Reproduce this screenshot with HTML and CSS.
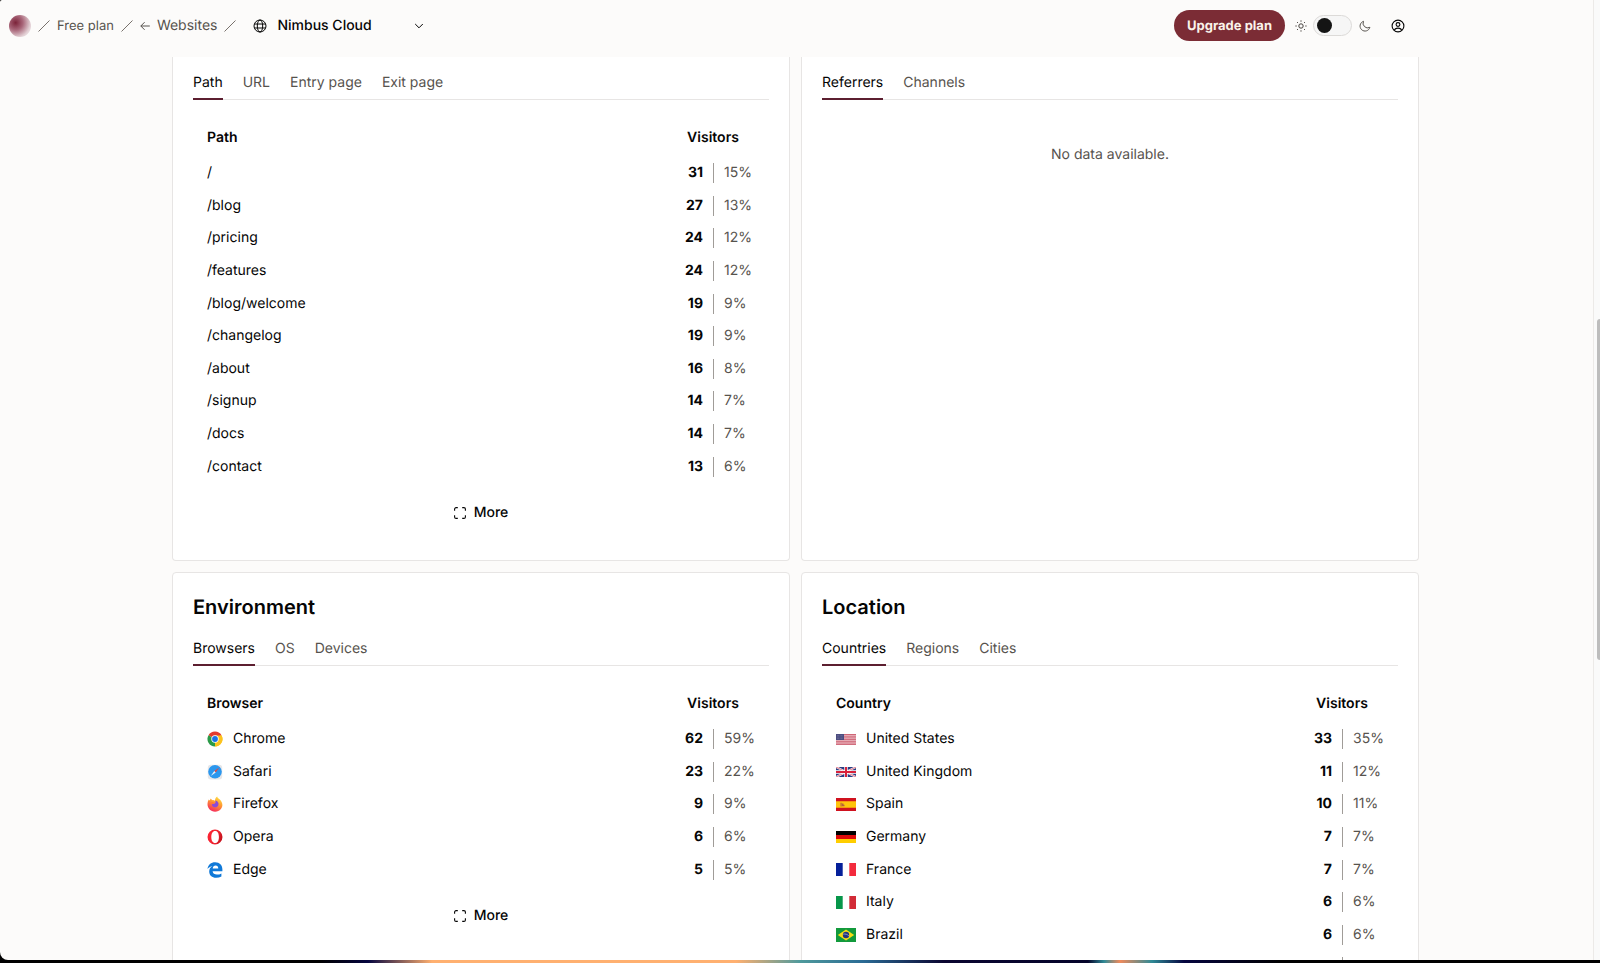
FILE: index.html
```html
<!DOCTYPE html>
<html lang="en">
<head>
    <meta charset="UTF-8">
    <meta name="viewport" content="width=device-width, initial-scale=1.0">
    <title>Nimbus Cloud</title>
    <link rel="stylesheet" href="styles.css">
</head>
<body>
    <!-- shared icons -->
    <svg class="sprite" aria-hidden="true">
        <symbol id="slash" viewBox="0 0 12 12"><path d="M.5 11.500 11.500.5" fill="none" stroke="currentColor"/></symbol>
        <symbol id="maximize" viewBox="0 0 12 12"><path d="M.6 3.800V2.100A1.500 1.500 0 0 1 2.100.6h1.700M8.200.6h1.700a1.500 1.500 0 0 1 1.500 1.500v1.700M11.400 8.200v1.700a1.500 1.500 0 0 1-1.500 1.500H8.200M3.800 11.400H2.100A1.500 1.500 0 0 1 .6 9.900V8.200" fill="none" stroke="currentColor" stroke-width="1.100"/></symbol>
    </svg>

    <div class="window">
        <header class="topbar">
            <nav class="crumbs">
                <a class="logo" href="#" aria-label="Home"></a>
                <svg class="slash"><use href="#slash"/></svg>
                <a class="plan" href="#">Free plan</a>
                <svg class="slash"><use href="#slash"/></svg>
                <a class="back" href="#">
                    <svg width="10" height="10" viewBox="0 0 10 10"><path d="M9.800 5H.8M4.600 1.200.8 5l3.800 3.800" fill="none" stroke="currentColor"/></svg>
                    Websites
                </a>
                <svg class="slash"><use href="#slash"/></svg>
            </nav>
            <div class="site-picker">
                <svg width="14" height="14" viewBox="0 0 14 14" fill="none" stroke="currentColor"><circle cx="7" cy="7" r="6"/><ellipse cx="7" cy="7" rx="2.700" ry="6"/><path d="M1.300 5h11.400M1.300 9h11.400"/></svg>
                <select class="site-select" aria-label="Website">
                    <option>Nimbus Cloud</option>
                </select>
                <svg class="chevron" width="10" height="6" viewBox="0 0 10 6"><path d="M1.200 1 5 4.800 8.800 1" fill="none" stroke="currentColor"/></svg>
            </div>
            <div class="actions">
                <button class="upgrade">Upgrade plan</button>
                <svg class="sun" width="12" height="12" viewBox="0 0 12 12" fill="none" stroke="currentColor"><circle cx="6" cy="6" r="2.200"/><path d="M6 .4v1.300M6 10.300v1.300M.4 6h1.300M10.300 6h1.300M2 2l.9.9M9.100 9.100l.9.9M2 10l.9-.9M9.100 2.900 10 2"/></svg>
                <input class="theme-switch" type="checkbox" role="switch" aria-label="Dark theme">
                <svg class="moon" width="12" height="12" viewBox="0 0 12 12"><path d="M4.500 1.300A5 5 0 1 0 10.900 7.300 4.600 4.600 0 0 1 4.500 1.300z" fill="none" stroke="currentColor"/></svg>
                <button class="account" aria-label="Account">
                    <svg width="14" height="14" viewBox="0 0 14 14" fill="none" stroke="currentColor" stroke-width="1.100"><circle cx="7" cy="7" r="5.900"/><circle cx="7" cy="5.500" r="1.900"/><path d="M3.500 11.200C3.800 9.400 5.200 9.100 7 9.100s3.200.3 3.500 2.100"/></svg>
                </button>
            </div>
        </header>

        <main class="content">
            <div class="cards">
                <section class="card card-scrolled">
                    <div class="tabs">
                        <button class="tab active">Path</button>
                        <button class="tab">URL</button>
                        <button class="tab">Entry page</button>
                        <button class="tab">Exit page</button>
                    </div>
                    <table class="metrics ten-rows">
                        <colgroup><col><col class="col-num"><col class="col-num"></colgroup>
                        <thead><tr><th>Path</th><th class="visitors" colspan="2">Visitors</th></tr></thead>
                        <tbody>
                            <tr><td>/</td><td class="num">31</td><td><span class="pct">15%</span></td></tr>
                            <tr><td>/blog</td><td class="num">27</td><td><span class="pct">13%</span></td></tr>
                            <tr><td>/pricing</td><td class="num">24</td><td><span class="pct">12%</span></td></tr>
                            <tr><td>/features</td><td class="num">24</td><td><span class="pct">12%</span></td></tr>
                            <tr><td>/blog/welcome</td><td class="num">19</td><td><span class="pct">9%</span></td></tr>
                            <tr><td>/changelog</td><td class="num">19</td><td><span class="pct">9%</span></td></tr>
                            <tr><td>/about</td><td class="num">16</td><td><span class="pct">8%</span></td></tr>
                            <tr><td>/signup</td><td class="num">14</td><td><span class="pct">7%</span></td></tr>
                            <tr><td>/docs</td><td class="num">14</td><td><span class="pct">7%</span></td></tr>
                            <tr><td>/contact</td><td class="num">13</td><td><span class="pct">6%</span></td></tr>
                        </tbody>
                    </table>
                    <button class="more"><svg width="12" height="12"><use href="#maximize"/></svg>More</button>
                </section>

                <section class="card card-scrolled">
                    <div class="tabs">
                        <button class="tab active">Referrers</button>
                        <button class="tab">Channels</button>
                    </div>
                    <p class="empty">No data available.</p>
                </section>

                <section class="card">
                    <h2>Environment</h2>
                    <div class="tabs">
                        <button class="tab active">Browsers</button>
                        <button class="tab">OS</button>
                        <button class="tab">Devices</button>
                    </div>
                    <table class="metrics five-rows">
                        <colgroup><col><col class="col-num"><col class="col-num"></colgroup>
                        <thead><tr><th>Browser</th><th class="visitors" colspan="2">Visitors</th></tr></thead>
                        <tbody>
                            <tr>
                                <td><span class="name">
                                    <svg width="16" height="16" viewBox="0 0 16 16"><path d="M8 8 1.500 4.250A7.500 7.500 0 0 1 14.500 4.250z" fill="#e33b2e"/><path d="M8 8l6.500-3.750A7.500 7.500 0 0 1 8 15.500z" fill="#fcc31e"/><path d="M8 8v7.500A7.500 7.500 0 0 1 1.500 4.250z" fill="#2a9a48"/><path d="M8 4.500h6.600a7.500 7.500 0 0 1-6.600 11l3-5.700z" fill="#fcc31e"/><circle cx="8" cy="8" r="3.700" fill="#fff"/><circle cx="8" cy="8" r="2.900" fill="#1a73e8"/></svg>
                                    Chrome
                                </span></td><td class="num">62</td><td><span class="pct">59%</span></td>
                            </tr>
                            <tr>
                                <td><span class="name">
                                    <svg width="16" height="16" viewBox="0 0 16 16"><rect x=".8" y=".8" width="14.400" height="14.800" rx="3" fill="#e6e6e8"/><circle cx="8" cy="7.800" r="6.800" fill="#2b97ee"/><path d="M12.300 3.500 7.300 7.100l1.400 1.400z" fill="#e8453c"/><path d="M3.700 12.100 7.300 7.100l1.400 1.400z" fill="#e9f1f8"/></svg>
                                    Safari
                                </span></td><td class="num">23</td><td><span class="pct">22%</span></td>
                            </tr>
                            <tr>
                                <td><span class="name">
                                    <svg width="16" height="16" viewBox="0 0 16 16"><defs><linearGradient id="fox" x1=".8" y1="0" x2=".3" y2="1"><stop offset="0" stop-color="#ffe845"/><stop offset=".45" stop-color="#ff9832"/><stop offset="1" stop-color="#f5245f"/></linearGradient></defs><path d="M10.200.4c.2 1.300 1.500 2 2.600 3.100 3 2.900 3.400 6.700 1.100 9.500-2.900 3.500-8.500 3.500-11.500.2C.1 10.600-.1 6.600 1.700 3.400l.9 1.200 1.200-2 1.400 1.600c1.100-.3 2 .1 2.800.6C8 2.900 8.700 1.400 10.200.4z" fill="url(#fox)"/><path d="M8.600 4.400c2.400.6 3.500 2.800 2.700 4.900-.7 2-3.400 2.700-5.200 1.400-1.200-.9-1.500-2.300-1-3.500 1 .9 1.800.7 2.700.2.900-.6.600-1.800.8-3z" fill="#8a4ad8"/><path d="M4.200 6.200c1.200-.4 2.500 0 3.500.6-.6 1-1.800 1.200-2.500 1.500z" fill="#ff7b35"/></svg>
                                    Firefox
                                </span></td><td class="num">9</td><td><span class="pct">9%</span></td>
                            </tr>
                            <tr>
                                <td><span class="name">
                                    <svg width="16" height="16" viewBox="0 0 16 16"><defs><linearGradient id="opera" x1="0" y1="0" x2="1" y2=".3"><stop offset="0" stop-color="#ff2434"/><stop offset=".7" stop-color="#ee2430"/><stop offset="1" stop-color="#c9141f"/></linearGradient></defs><path d="M8 .5a7.500 7.500 0 1 1 0 15 7.500 7.500 0 0 1 0-15zM8.200 2C5.600 2 4.300 4.600 4.300 8s1.300 6 3.900 6 3.700-2.600 3.700-6-1.100-6-3.700-6z" fill="url(#opera)" fill-rule="evenodd"/></svg>
                                    Opera
                                </span></td><td class="num">6</td><td><span class="pct">6%</span></td>
                            </tr>
                            <tr>
                                <td><span class="name">
                                    <svg width="16" height="16" viewBox="0 0 16 16"><path d="M.5 7C1 2.900 4 .2 8.200.2c4.400 0 7.200 3 7.200 7.300v1.800H5.600c.2 2.300 2 3.300 4.300 3.300 1.700 0 3.100-.4 4.500-1.200v3.200c-1.600.8-3.300 1.200-5.200 1.200-4.300 0-7-2.500-7-6.300 0-2.500 1.200-4.500 3.300-5.600C3.300 4.500 1.500 5.400.5 7zM5.700 6.400h5.600c0-1.900-1-2.900-2.700-2.900-1.600 0-2.700 1.200-2.900 2.900z" fill="#1079d8" fill-rule="evenodd"/></svg>
                                    Edge
                                </span></td><td class="num">5</td><td><span class="pct">5%</span></td>
                            </tr>
                        </tbody>
                    </table>
                    <button class="more"><svg width="12" height="12"><use href="#maximize"/></svg>More</button>
                </section>

                <section class="card">
                    <h2>Location</h2>
                    <div class="tabs">
                        <button class="tab active">Countries</button>
                        <button class="tab">Regions</button>
                        <button class="tab">Cities</button>
                    </div>
                    <table class="metrics ten-rows">
                        <colgroup><col><col class="col-num"><col class="col-num"></colgroup>
                        <thead><tr><th>Country</th><th class="visitors" colspan="2">Visitors</th></tr></thead>
                        <tbody>
                            <tr>
                                <td><span class="name">
                                    <svg width="20" height="11" viewBox="0 0 20 11"><path fill="#f0c8cf" d="M0 0h20v11H0z"/><path d="M0 .5h20M0 2.200h20M0 3.900h20M0 5.600h20M0 7.300h20M0 9h20M0 10.600h20" stroke="#c9596b" stroke-width=".9"/><path fill="#4c4d80" d="M0 0h8v6H0z"/><path d="M1 1.500h6M1 3h6M1 4.500h6" stroke="#8f90b3" stroke-width=".5" stroke-dasharray=".6 .8"/></svg>
                                    United States
                                </span></td><td class="num">33</td><td><span class="pct">35%</span></td>
                            </tr>
                            <tr>
                                <td><span class="name">
                                    <svg width="20" height="10" viewBox="0 0 20 10"><path fill="#2b3c82" d="M0 0h20v10H0z"/><path d="M0 0l20 10M20 0 0 10" stroke="#fff" stroke-width="2"/><path d="M0 0l20 10M20 0 0 10" stroke="#d8344a" stroke-width=".7"/><path d="M10 0v10M0 5h20" stroke="#fff" stroke-width="3.400"/><path d="M10 0v10M0 5h20" stroke="#d8213b" stroke-width="2"/></svg>
                                    United Kingdom
                                </span></td><td class="num">11</td><td><span class="pct">12%</span></td>
                            </tr>
                            <tr>
                                <td><span class="name">
                                    <svg width="20" height="13" viewBox="0 0 20 13"><path fill="#d0121f" d="M0 0h20v13H0z"/><path fill="#ffc40c" d="M0 3.250h20v6.500H0z"/><path fill="#b5603a" d="M4.500 4.800h1.200v3.600H4.500zM6 5.600h1.500v1.200h1v1.400H6z"/></svg>
                                    Spain
                                </span></td><td class="num">10</td><td><span class="pct">11%</span></td>
                            </tr>
                            <tr>
                                <td><span class="name">
                                    <svg width="20" height="12" viewBox="0 0 20 12"><path d="M0 0h20v4H0z"/><path fill="#dd0a0a" d="M0 4h20v4H0z"/><path fill="#ffce00" d="M0 8h20v4H0z"/></svg>
                                    Germany
                                </span></td><td class="num">7</td><td><span class="pct">7%</span></td>
                            </tr>
                            <tr>
                                <td><span class="name">
                                    <svg width="20" height="13" viewBox="0 0 20 13"><path fill="#fff" d="M0 0h20v13H0z"/><path fill="#05209a" d="M0 0h6.700v13H0z"/><path fill="#f32b3d" d="M13.300 0H20v13h-6.700z"/></svg>
                                    France
                                </span></td><td class="num">7</td><td><span class="pct">7%</span></td>
                            </tr>
                            <tr>
                                <td><span class="name">
                                    <svg width="20" height="13" viewBox="0 0 20 13"><path fill="#fff" d="M0 0h20v13H0z"/><path fill="#07964a" d="M0 0h6.700v13H0z"/><path fill="#d22b37" d="M13.300 0H20v13h-6.700z"/></svg>
                                    Italy
                                </span></td><td class="num">6</td><td><span class="pct">6%</span></td>
                            </tr>
                            <tr>
                                <td><span class="name">
                                    <svg width="20" height="14" viewBox="0 0 20 14"><path fill="#129a3c" d="M0 0h20v14H0z"/><path fill="#f7dc14" d="M10 1.600 18.200 7 10 12.400 1.800 7z"/><circle cx="10" cy="7" r="3.200" fill="#24377c"/><path d="M7.200 6.200c2-.5 4.200.1 5.700 1.700" fill="none" stroke="#cfd8e6" stroke-width=".6"/></svg>
                                    Brazil
                                </span></td><td class="num">6</td><td><span class="pct">6%</span></td>
                            </tr>
                            <tr><td></td><td></td><td><span class="pct"></span></td></tr>
                            <tr><td></td><td></td><td><span class="pct"></span></td></tr>
                            <tr><td></td><td></td><td><span class="pct"></span></td></tr>
                        </tbody>
                    </table>
                </section>
            </div>
        </main>
        <div class="scrollbar"><div class="thumb"></div></div>
    </div>
</body>
</html>
```
FILE: styles.css
```css
* { box-sizing: border-box; }
body {
    margin: 0;
    height: 100vh;
    overflow: hidden;
    font-family: Inter, "Liberation Sans", sans-serif;
    font-size: 14px;
    line-height: 20px;
    text-rendering: geometricPrecision;
    color: #050505;
    /* desktop showing under the window */
    background: linear-gradient(to right, #000 0, #000 20%, #05053f 23%, #ffb070 27%, #ffb070 46%, #4f9a9c 50%, #2a6a94 54%, #0a0530 59%, #04042a 68%, #2f8a96 69%, #f08a5c 70%, #2f8a96 72%, #05053f 74%, #000 80%);
}
button, select, input { font: inherit; color: inherit; margin: 0; text-rendering: inherit; }
button { border: none; background: none; padding: 0; cursor: pointer; }
a { color: inherit; text-decoration: none; }
svg { display: block; flex: none; }
.sprite { position: absolute; width: 0; height: 0; }

.window {
    position: relative;
    display: flex;
    flex-direction: column;
    height: calc(100vh - 3px);
    padding-right: 9px;
    background: #fcfbfa;
    border-radius: 2px 0 0 8px;
    overflow: hidden;
}

.topbar { display: flex; flex: none; align-items: center; height: 57px; padding: 0 186px 6px 9px; }
.crumbs { display: flex; align-items: center; gap: 7px; color: #57534e; }
.logo { width: 22px; height: 22px; border-radius: 50%; background: radial-gradient(circle at 30% 35%, #7b2339 0, #a9677a 35%, #e2cfd4 70%, #fcfbfa 100%); }
.slash { width: 12px; height: 12px; color: #78716c; }
.plan { font-size: 13px; }
.back { display: flex; align-items: center; gap: 7px; }
.site-picker { position: relative; display: flex; align-items: center; gap: 10px; margin-left: 17px; }
.site-select { appearance: none; width: 154px; padding: 0; border: none; background: none; font-weight: 500; }
.chevron { position: absolute; right: 7px; pointer-events: none; }
.actions { display: flex; align-items: center; margin-left: auto; }
.upgrade { height: 31px; padding: 0 13px; border-radius: 16px; background: #7b2c35; color: #faf3ea; font-size: 13px; font-weight: 700; }
.sun { margin: 0 6px 0 10px; color: #44403c; }
.moon { margin: 0 20px 0 7px; color: #57534e; }
.theme-switch { appearance: none; width: 39px; height: 21px; padding: 2px 3px; border: 1px solid #dcdad8; border-radius: 11px; background: #f6f6f6; cursor: pointer; }
.theme-switch::before { content: ""; display: block; width: 15px; height: 15px; border-radius: 50%; background: #141414; }
.theme-switch:checked::before { margin-left: auto; }

.content { flex: 1; overflow: hidden; }
.cards { display: grid; grid-template-columns: 1fr 1fr; gap: 11px; max-width: 1247px; margin: 0 auto; }
.card { display: flex; flex-direction: column; padding: 20px 20px 37px; border: 1px solid #e7e5e4; border-radius: 4px; background: #fff; }
.card-scrolled { padding-top: 9px; border-top: none; border-radius: 0 0 4px 4px; }
.card h2 { margin: 0 0 11px; font-size: 20px; line-height: 28px; font-weight: 600; }

.tabs { display: flex; gap: 20px; height: 34px; border-bottom: 1px solid #e7e5e4; }
.tab { height: 34px; padding-top: 1px; border-bottom: 2px solid transparent; color: #57534e; }
.tab.active { color: #050505; border-bottom-color: #5c1f30; }

.metrics { width: auto; margin: 19px 14px 0; table-layout: fixed; border-collapse: collapse; }
.ten-rows { height: 364px; }
.five-rows { height: 201px; }
.col-num { width: 42px; }
.metrics th { height: 38px; padding: 0; text-align: left; font-weight: 600; }
.metrics td { padding: 0; }
.metrics .visitors { text-align: center; }
.metrics .num { padding-right: 10px; text-align: right; font-weight: 700; }
.pct { display: block; height: 20px; padding-left: 10px; border-left: 1px solid #a09c98; color: #57534e; }
.name { display: flex; align-items: center; gap: 10px; }

.more { display: flex; align-items: center; align-self: center; gap: 8px; margin-top: 20px; font-weight: 500; }
.empty { margin: 45px 0 0; text-align: center; color: #57534e; }

.scrollbar { position: absolute; top: 0; right: 0; bottom: 0; width: 7px; border-left: 1px solid #eceae8; background: #fafafa; }
.thumb { width: 3px; height: 341px; margin: 319px 0 0 auto; border-radius: 3px 0 0 3px; background: #bdbdbd; }
```
